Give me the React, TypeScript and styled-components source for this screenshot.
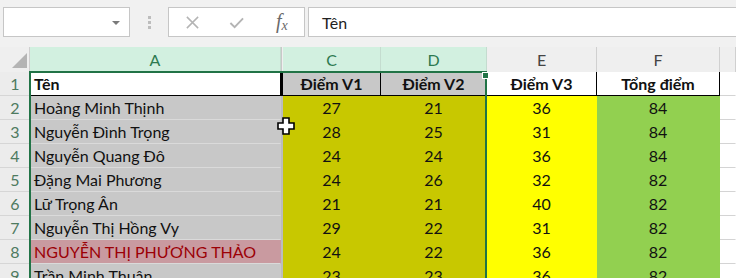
import React from 'react'
import styled, { createGlobalStyle } from 'styled-components'

const GlobalStyle = createGlobalStyle`
  html, body {
    margin: 0;
    padding: 0;
    background: #ffffff;
  }
  body {
    font-family: Lato, "Noto Sans", sans-serif;
    overflow: hidden;
  }
`

const COLS = '30px 251px 2px 98px 106px 110px 123px 1fr'

const OLIVE = '#c8c800'
const YELLOW = '#ffff00'
const GREEN = '#92d050'
const SEL_GRAY = '#c8c8c8'
const SEL_GREEN = '#217346'

type Student = { name: string; v1: number; v2: number; v3: number; total: number; warn?: boolean }

const students: Student[] = [
  { name: 'Hoàng Minh Thịnh', v1: 27, v2: 21, v3: 36, total: 84 },
  { name: 'Nguyễn Đình Trọng', v1: 28, v2: 25, v3: 31, total: 84 },
  { name: 'Nguyễn Quang Đô', v1: 24, v2: 24, v3: 36, total: 84 },
  { name: 'Đặng Mai Phương', v1: 24, v2: 26, v3: 32, total: 82 },
  { name: 'Lữ Trọng Ân', v1: 21, v2: 21, v3: 40, total: 82 },
  { name: 'Nguyễn Thị Hồng Vy', v1: 29, v2: 22, v3: 31, total: 82 },
  { name: 'NGUYỄN THỊ PHƯƠNG THẢO', v1: 24, v2: 22, v3: 36, total: 82, warn: true },
  { name: 'Trần Minh Thuận', v1: 23, v2: 23, v3: 36, total: 82 },
]

const App: React.FC = () => (
  <Page>
    <GlobalStyle />
    <FormulaBar>
      <NameBox>
        <DropArrow />
      </NameBox>
      <Grip>
        <i />
        <i />
        <i />
      </Grip>
      <Buttons>
        <BarIcon viewBox="0 0 16 16">
          <path d="M2 2 L14 14 M14 2 L2 14" stroke="#b4b4b4" strokeWidth="1.6" fill="none" />
        </BarIcon>
        <BarIcon viewBox="0 0 16 16">
          <path d="M1.5 8.5 L6 13 L15 3.5" stroke="#b4b4b4" strokeWidth="2" fill="none" />
        </BarIcon>
        <Fx>
          f<sub>x</sub>
        </Fx>
      </Buttons>
      <FormulaInput>Tên</FormulaInput>
    </FormulaBar>

    <Sheet>
      <HeaderRow>
        <Corner>
          <svg width="30" height="25" viewBox="0 0 30 25">
            <polygon points="27,6 27,21 12,21" fill="#b4b4b4" />
          </svg>
        </Corner>
        <ColHead $selected>A</ColHead>
        <HiddenCol />
        <ColHead $selected>C</ColHead>
        <ColHead $selected>D</ColHead>
        <ColHead>E</ColHead>
        <ColHead>F</ColHead>
        <ColHead />
      </HeaderRow>

      <Row>
        <RowHead>1</RowHead>
        <Cell $fill="#ffffff" $bold $boxed>Tên</Cell>
        <Cell $fill="#000000" />
        <Cell $fill={SEL_GRAY} $bold $boxed $center>Điểm V1</Cell>
        <Cell $fill={SEL_GRAY} $bold $boxed $center>Điểm V2</Cell>
        <Cell $fill="#ffffff" $bold $boxed $center>Điểm V3</Cell>
        <Cell $fill="#ffffff" $bold $boxed $center>Tổng điểm</Cell>
        <Cell $grid />
      </Row>

      {students.map((s, i) => (
        <Row key={s.name}>
          <RowHead>{i + 2}</RowHead>
          <Cell
            $fill={s.warn ? '#c99aa0' : SEL_GRAY}
            $color={s.warn ? '#9c0006' : '#111'}
            $grid
          >
            {s.name}
          </Cell>
          <Cell $fill="#bcbcbc" />
          <Cell $fill={OLIVE} $center>{s.v1}</Cell>
          <Cell $fill={OLIVE} $center>{s.v2}</Cell>
          <Cell $fill={YELLOW} $center>{s.v3}</Cell>
          <Cell $fill={GREEN} $center>{s.total}</Cell>
          <Cell $grid />
        </Row>
      ))}

      <Selection>
        <FillHandle />
      </Selection>

      <CellCursor viewBox="0 0 18 18">
        <path
          d="M6 1 H12 V6 H17 V12 H12 V17 H6 V12 H1 V6 H6 Z"
          fill="#ffffff"
          stroke="#000000"
          strokeWidth="1.6"
          strokeLinejoin="miter"
        />
      </CellCursor>
    </Sheet>
  </Page>
)

const Page = styled.div`
  width: 736px;
  height: 278px;
  overflow: hidden;
  background: #ffffff;
`

const FormulaBar = styled.div`
  height: 47px;
  box-sizing: border-box;
  display: flex;
  align-items: flex-start;
  padding: 7px 0 0 3px;
  background: #f1f1f1;
`

const Field = styled.div`
  height: 30px;
  box-sizing: border-box;
  background: #ffffff;
  border: 1px solid #c6c6c6;
  display: flex;
  align-items: center;
`

const NameBox = styled(Field)`
  width: 127px;
  justify-content: flex-end;
  padding-right: 9px;
`

const DropArrow = styled.span`
  width: 0;
  height: 0;
  border-left: 4px solid transparent;
  border-right: 4px solid transparent;
  border-top: 4px solid #7a7a7a;
  margin-top: 1px;
`

const Grip = styled.div`
  width: 38px;
  height: 30px;
  display: flex;
  flex-direction: column;
  align-items: center;
  justify-content: center;
  gap: 2px;

  i {
    display: block;
    width: 3px;
    height: 3px;
    background: #bdbdbd;
  }
`

const Buttons = styled(Field)`
  width: 137px;
  padding-left: 16px;
  gap: 29px;
`

const BarIcon = styled.svg`
  width: 15px;
  height: 15px;
  flex-shrink: 0;
`

const Fx = styled.span`
  font-family: "Liberation Serif", serif;
  font-style: italic;
  font-size: 20px;
  color: #6a6a6a;
  margin-left: 3px;
  line-height: 1;

  sub {
    font-size: 14px;
    vertical-align: -2px;
  }
`

const FormulaInput = styled(Field)`
  flex: 1;
  margin-left: 3px;
  border-right: none;
  padding-left: 13px;
  font-size: 16px;
  color: #222;
`

const Sheet = styled.div`
  position: relative;
  display: flex;
  flex-direction: column;
`

const HeaderRow = styled.div`
  display: grid;
  grid-template-columns: ${COLS};
  height: 25px;
  background: #efefef;
`

const Corner = styled.div`
  border-right: 1px solid #cfcfcf;
  border-bottom: 1px solid #ababab;
  box-sizing: border-box;

  svg {
    display: block;
  }
`

const ColHead = styled.div<{ $selected?: boolean }>`
  box-sizing: border-box;
  display: flex;
  align-items: center;
  justify-content: center;
  font-size: 16px;
  background: ${(p) => (p.$selected ? '#d2f0e0' : '#efefef')};
  color: ${(p) => (p.$selected ? '#2d7a50' : '#444444')};
  border-right: 1px solid ${(p) => (p.$selected ? '#c4dccf' : '#d0d0d0')};
  border-bottom: 1px solid #ababab;
`

const HiddenCol = styled.div`
  box-sizing: border-box;
  background: #efefef;
  border-left: 1px solid #c8c8c8;
  border-bottom: 1px solid #ababab;
`

const Row = styled.div`
  display: grid;
  grid-template-columns: ${COLS};
  height: 24px;
`

const RowHead = styled.div`
  box-sizing: border-box;
  display: flex;
  align-items: center;
  justify-content: center;
  font-size: 16px;
  color: #4e7a60;
  background: #ececec;
  border-bottom: 1px solid #d6d6d6;
`

const Cell = styled.div<{
  $fill?: string
  $color?: string
  $bold?: boolean
  $center?: boolean
  $boxed?: boolean
  $grid?: boolean
}>`
  box-sizing: border-box;
  display: flex;
  align-items: center;
  justify-content: ${(p) => (p.$center ? 'center' : 'flex-start')};
  padding: 0 ${(p) => (p.$center ? '0' : '4px')};
  white-space: nowrap;
  overflow: hidden;
  font-size: 16px;
  font-weight: ${(p) => (p.$bold ? 700 : 400)};
  color: ${(p) => p.$color || '#111111'};
  background: ${(p) => p.$fill || '#ffffff'};
  border-bottom: 1px solid
    ${(p) => (p.$boxed ? '#000000' : p.$grid ? (p.$fill ? '#dadada' : '#d4d4d4') : 'transparent')};
  border-right: 1px solid ${(p) => (p.$boxed ? '#000000' : 'transparent')};
`

const Selection = styled.div`
  position: absolute;
  left: 29px;
  top: 24px;
  width: 458px;
  height: 300px;
  box-sizing: border-box;
  border: 2px solid ${SEL_GREEN};
  border-bottom: none;
  pointer-events: none;
`

const FillHandle = styled.span`
  position: absolute;
  right: -4px;
  top: -1px;
  width: 5px;
  height: 5px;
  background: ${SEL_GREEN};
  border: 1px solid #ffffff;
`

const CellCursor = styled.svg`
  position: absolute;
  left: 277px;
  top: 70px;
  width: 18px;
  height: 18px;
`

export default App
